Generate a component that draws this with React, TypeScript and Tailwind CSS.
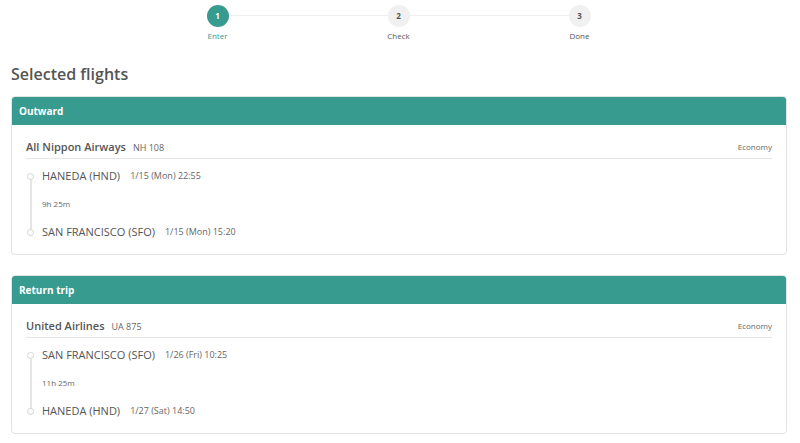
import React from "react";

const teal = "bg-[#379b90]";

function Step({ n, label, active }: { n: number; label: string; active?: boolean }) {
  return (
    <div className="relative flex w-[22px] flex-col items-center">
      <div
        className={`flex h-[22px] w-[22px] items-center justify-center rounded-full text-[8px] font-bold ${
          active ? "bg-[#379b90] text-white" : "bg-[#f0f0f0] text-[#555]"
        }`}
      >
        {n}
      </div>
      <div
        className={`absolute top-[25px] whitespace-nowrap text-[8px] ${
          active ? "text-[#379b90]" : "text-[#555]"
        }`}
      >
        {label}
      </div>
    </div>
  );
}

function Leg({
  title,
  airline,
  code,
  from,
  fromTime,
  dur,
  to,
  toTime,
}: {
  title: string;
  airline: string;
  code: string;
  from: string;
  fromTime: string;
  dur: string;
  to: string;
  toTime: string;
}) {
  return (
    <div className="overflow-hidden rounded-[4px] border border-[#e3e3e3]">
      <div className={`${teal} flex h-[28px] items-center px-[7px] text-[10px] font-bold text-white`}>
        {title}
      </div>
      <div className="px-[14px] pb-[12px]">
        <div className="flex h-[34px] items-end border-b border-[#e6e6e6] pb-[3px]">
          <div className="flex w-full items-baseline gap-[7px]">
            <span className="text-[11px] font-semibold text-[#555]">{airline}</span>
            <span className="text-[9px] text-[#666]">{code}</span>
            <span className="relative -top-[1px] ml-auto text-[8px] text-[#666]">Economy</span>
          </div>
        </div>
        <div className="relative mt-[7px]">
          <div className="absolute left-[4px] top-[14px] h-[56px] w-[2px] bg-[#e5e5e5]" />
          <div className="flex h-[20px] items-center">
            <div className="relative z-10 ml-[1px] h-[7px] w-[7px] rounded-full border border-[#d5d5d5] bg-white" />
            <span className="ml-[8px] text-[11px] text-[#555]">{from}</span>
            <span className="ml-[10px] text-[9px] text-[#666]">{fromTime}</span>
          </div>
          <div className="flex h-[36px] items-center pl-[16px] text-[8px] text-[#666]">{dur}</div>
          <div className="flex h-[20px] items-center">
            <div className="relative z-10 ml-[1px] h-[7px] w-[7px] rounded-full border border-[#d5d5d5] bg-white" />
            <span className="ml-[8px] text-[11px] text-[#555]">{to}</span>
            <span className="ml-[10px] text-[9px] text-[#666]">{toTime}</span>
          </div>
        </div>
      </div>
    </div>
  );
}

export default function App() {
  return (
    <div
      className="h-[443px] w-[800px] bg-white"
      style={{ fontFamily: '"Open Sans", sans-serif' }}
    >
      <div className="flex justify-center pt-[5px]">
        <div className="mr-[3px] flex w-[384px] items-start">
          <Step n={1} label="Enter" active />
          <div className="mt-[10px] h-[1px] flex-1 bg-[#eeeeee]" />
          <Step n={2} label="Check" />
          <div className="mt-[10px] h-[1px] flex-1 bg-[#eeeeee]" />
          <Step n={3} label="Done" />
        </div>
      </div>
      <div className="ml-[11px] mr-[13px]">
        <h1 className="mt-[35px] text-[16px] font-semibold text-[#555]">Selected flights</h1>
        <div className="mt-[10px] flex flex-col gap-[20px]">
          <Leg
            title="Outward"
            airline="All Nippon Airways"
            code="NH 108"
            from="HANEDA (HND)"
            fromTime="1/15 (Mon) 22:55"
            dur="9h 25m"
            to="SAN FRANCISCO (SFO)"
            toTime="1/15 (Mon) 15:20"
          />
          <Leg
            title="Return trip"
            airline="United Airlines"
            code="UA 875"
            from="SAN FRANCISCO (SFO)"
            fromTime="1/26 (Fri) 10:25"
            dur="11h 25m"
            to="HANEDA (HND)"
            toTime="1/27 (Sat) 14:50"
          />
        </div>
      </div>
    </div>
  );
}
